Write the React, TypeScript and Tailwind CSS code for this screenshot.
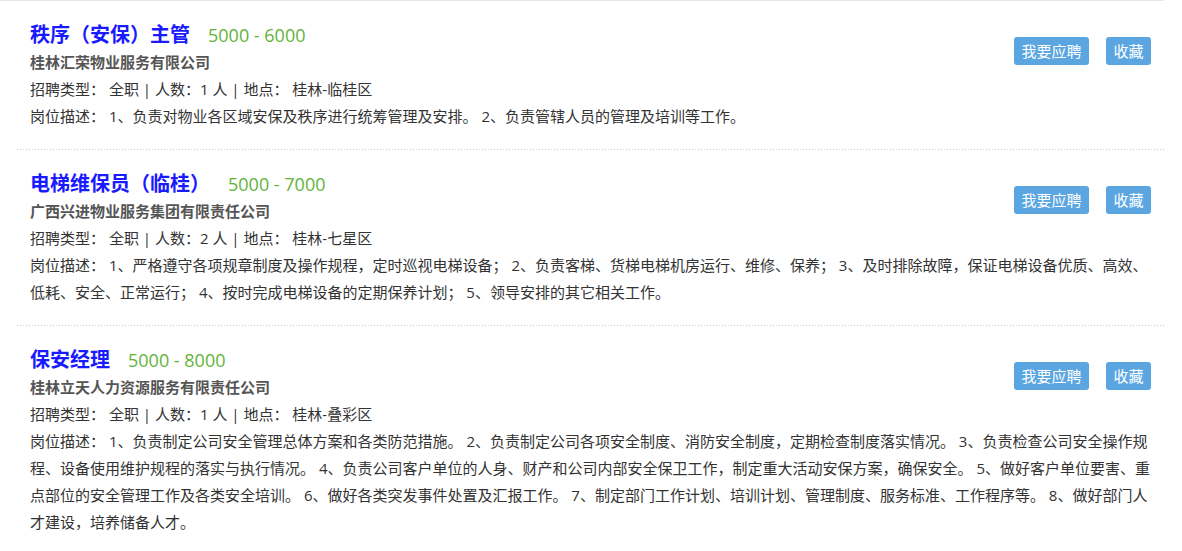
import React from "react";

type Job = {
  title: string;
  salary: string;
  company: string;
  count: number;
  area: string;
  desc: string;
};

const jobs: Job[] = [
  {
    title: "秩序（安保）主管",
    salary: "5000 - 6000",
    company: "桂林汇荣物业服务有限公司",
    count: 1,
    area: "桂林-临桂区",
    desc: "1、负责对物业各区域安保及秩序进行统筹管理及安排。 2、负责管辖人员的管理及培训等工作。",
  },
  {
    title: "电梯维保员（临桂）",
    salary: "5000 - 7000",
    company: "广西兴进物业服务集团有限责任公司",
    count: 2,
    area: "桂林-七星区",
    desc: "1、严格遵守各项规章制度及操作规程，定时巡视电梯设备； 2、负责客梯、货梯电梯机房运行、维修、保养； 3、及时排除故障，保证电梯设备优质、高效、低耗、安全、正常运行； 4、按时完成电梯设备的定期保养计划； 5、领导安排的其它相关工作。",
  },
  {
    title: "保安经理",
    salary: "5000 - 8000",
    company: "桂林立天人力资源服务有限责任公司",
    count: 1,
    area: "桂林-叠彩区",
    desc: "1、负责制定公司安全管理总体方案和各类防范措施。 2、负责制定公司各项安全制度、消防安全制度，定期检查制度落实情况。 3、负责检查公司安全操作规程、设备使用维护规程的落实与执行情况。 4、负责公司客户单位的人身、财产和公司内部安全保卫工作，制定重大活动安保方案，确保安全。 5、做好客户单位要害、重点部位的安全管理工作及各类安全培训。 6、做好各类突发事件处置及汇报工作。 7、制定部门工作计划、培训计划、管理制度、服务标准、工作程序等。 8、做好部门人才建设，培养储备人才。",
  },
];

function JobItem({ job, last }: { job: Job; last: boolean }) {
  return (
    <div className="ml-[17px]">
      <div className="px-[13px] pt-5 pb-[19px]">
        {/* 按钮浮在右侧 */}
        <div className="float-right mt-4 flex gap-[17px]">
          <button className="h-7 rounded-[3px] bg-[#5ba6e1] px-[7.5px] text-[15px] leading-7 text-white">
            我要应聘
          </button>
          <button className="h-7 rounded-[3px] bg-[#5ba6e1] px-[7.5px] text-[15px] leading-7 text-white">
            收藏
          </button>
        </div>
        <div className="flex items-center h-7">
          <span className="text-[20px] font-bold text-[#1a1aff]">{job.title}</span>
          <span className="ml-[18px] text-[18px] text-[#62b33a]">{job.salary}</span>
        </div>
        <div className="text-[15px] leading-[27px] font-bold text-[#555]">{job.company}</div>
        <div className="text-[15px] leading-[27px] text-[#333]">
          招聘类型： 全职 | 人数：{job.count} 人 | 地点： {job.area}
        </div>
        <div className="text-[15px] leading-[27px] text-[#333]">岗位描述： {job.desc}</div>
      </div>
      {!last && (
        <div className="h-px bg-[linear-gradient(to_right,#c8c8c8_1px,transparent_1px)] bg-[length:3px_1px]" />
      )}
    </div>
  );
}

export default function App() {
  return (
    <div
      className="min-h-[551px] bg-white"
      style={{ fontFamily: '"Open Sans", "Noto Sans CJK SC", sans-serif' }}
    >
      <div className="w-[1164px] border-t border-[#e6e6e6]">
        {jobs.map((job, i) => (
          <JobItem key={job.title} job={job} last={i === jobs.length - 1} />
        ))}
      </div>
    </div>
  );
}
